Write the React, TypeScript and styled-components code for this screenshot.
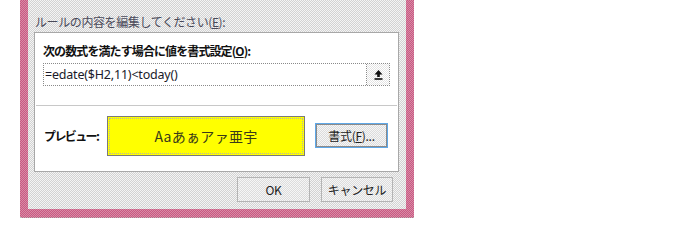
import styled, { createGlobalStyle } from "styled-components";

const GlobalStyle = createGlobalStyle`
  body {
    margin: 0;
    background: #fff;
    font-family: "Noto Sans CJK JP", "Liberation Sans", sans-serif;
  }
`;

const App = () => {
  return (
    <>
      <GlobalStyle />
      <Page>
        <Dialog>
          <Inner>
            <TopLabel>
              ルールの内容を編集してください(<u>E</u>):
            </TopLabel>
            <Panel>
              <Section>
                <BoldLabel>
                  次の数式を満たす場合に値を書式設定(<u>O</u>):
                </BoldLabel>
                <FormulaBox>
                  <FormulaText>=edate($H2,11)&lt;today()</FormulaText>
                  <CollapseButton>
                    <svg width="9" height="10" viewBox="0 0 9 10">
                      <path d="M4.5 0 L8.5 4.5 L5.8 4.5 L5.8 7 L3.2 7 L3.2 4.5 L0.5 4.5 Z" fill="#111" />
                      <rect x="0.5" y="8.2" width="8" height="1.6" fill="#111" />
                    </svg>
                  </CollapseButton>
                </FormulaBox>
              </Section>
              <Divider />
              <PreviewRow>
                <PreviewLabel>プレビュー:</PreviewLabel>
                <PreviewBox>Aaあぁアァ亜宇</PreviewBox>
                <DialogButton $focused $width={73} $height={25}>
                  書式(<u>F</u>)...
                </DialogButton>
              </PreviewRow>
            </Panel>
            <Footer>
              <DialogButton $width={73} $height={25}>OK</DialogButton>
              <DialogButton $width={72} $height={25}>キャンセル</DialogButton>
            </Footer>
          </Inner>
        </Dialog>
      </Page>
    </>
  );
};

export default App;

const Page = styled.div`
  width: 698px;
  height: 247px;
  padding-left: 20px;
  box-sizing: border-box;
`;

const Dialog = styled.div`
  width: 394px;
  height: 218px;
  box-sizing: border-box;
  padding: 0 8px 8px 8px;
  background: repeating-conic-gradient(#c85a82 0 25%, #d98aa6 0 50%) 0 0 / 2px 2px;
  border-bottom: 1px dotted #b8b8b8;
`;

const Inner = styled.div`
  height: 100%;
  box-sizing: border-box;
  padding: 14px 7px 0 6px;
  background: repeating-conic-gradient(#d2d2d2 0 25%, #f4f4f4 0 50%) 0 0 / 2px 2px;
  display: flex;
  flex-direction: column;
`;

const TopLabel = styled.div`
  font-size: 12px;
  line-height: 15px;
  color: #4a4a5a;
  height: 18px;
  padding-left: 1px;
  letter-spacing: -0.4px;

  u {
    text-underline-offset: 1px;
  }
`;

const Panel = styled.div`
  height: 140px;
  box-sizing: border-box;
  background: #fff;
  border: 1px solid #a8a8a8;
  display: flex;
  flex-direction: column;
`;

const Section = styled.div`
  padding: 10px 8px 0 8px;
  height: 72px;
  box-sizing: border-box;
`;

const BoldLabel = styled.div`
  font-size: 12px;
  font-weight: bold;
  line-height: 16px;
  color: #111;
  height: 20px;
  letter-spacing: -0.9px;
`;

const FormulaBox = styled.div`
  height: 23px;
  box-sizing: border-box;
  border: 1px dotted #8a8a8a;
  display: flex;
  align-items: stretch;
`;

const FormulaText = styled.div`
  flex: 1;
  font-size: 12.5px;
  line-height: 21px;
  padding-left: 1px;
  color: #1a1a2a;
  letter-spacing: -0.2px;
  font-family: "Noto Sans", "Liberation Sans", sans-serif;
`;

const CollapseButton = styled.div`
  width: 22px;
  border-left: 1px dotted #8a8a8a;
  display: flex;
  align-items: center;
  justify-content: center;
  background: repeating-conic-gradient(#e4e4e4 0 25%, #fff 0 50%) 0 0 / 2px 2px;
`;

const Divider = styled.div`
  height: 1px;
  margin: 0 1px;
  background: #c8c8c8;
`;

const PreviewRow = styled.div`
  flex: 1;
  display: flex;
  align-items: center;
  padding: 0 0 6px 9px;
`;

const PreviewLabel = styled.div`
  width: 63px;
  font-size: 12px;
  font-weight: bold;
  color: #111;
  letter-spacing: -1.6px;
`;

const PreviewBox = styled.div`
  width: 198px;
  height: 40px;
  box-sizing: border-box;
  border: 1px solid #7a7a7a;
  outline: 1px dotted #b0b0b0;
  outline-offset: -3px;
  background: #ffff00;
  display: flex;
  align-items: center;
  justify-content: center;
  font-size: 14px;
  color: #3a3a1a;
  margin-right: 10px;
  letter-spacing: 0.3px;
`;

const DialogButton = styled.div<{ $focused?: boolean; $width: number; $height: number }>`
  width: ${(p) => p.$width}px;
  height: ${(p) => p.$height}px;
  box-sizing: border-box;
  border: 1px solid ${(p) => (p.$focused ? "#5fa8e8" : "#b4b4b4")};
  box-shadow: ${(p) => (p.$focused ? "inset 0 0 0 1px #8a8a8a" : "none")};
  background: repeating-conic-gradient(#dcdcdc 0 25%, #f6f6f6 0 50%) 0 0 / 2px 2px;
  display: flex;
  align-items: center;
  justify-content: center;
  font-size: 12px;
  color: #222;
  letter-spacing: -0.3px;

  u {
    text-underline-offset: 1px;
  }
`;

const Footer = styled.div`
  display: flex;
  justify-content: flex-end;
  gap: 11px;
  padding: 5px 6px 0 0;
`;
